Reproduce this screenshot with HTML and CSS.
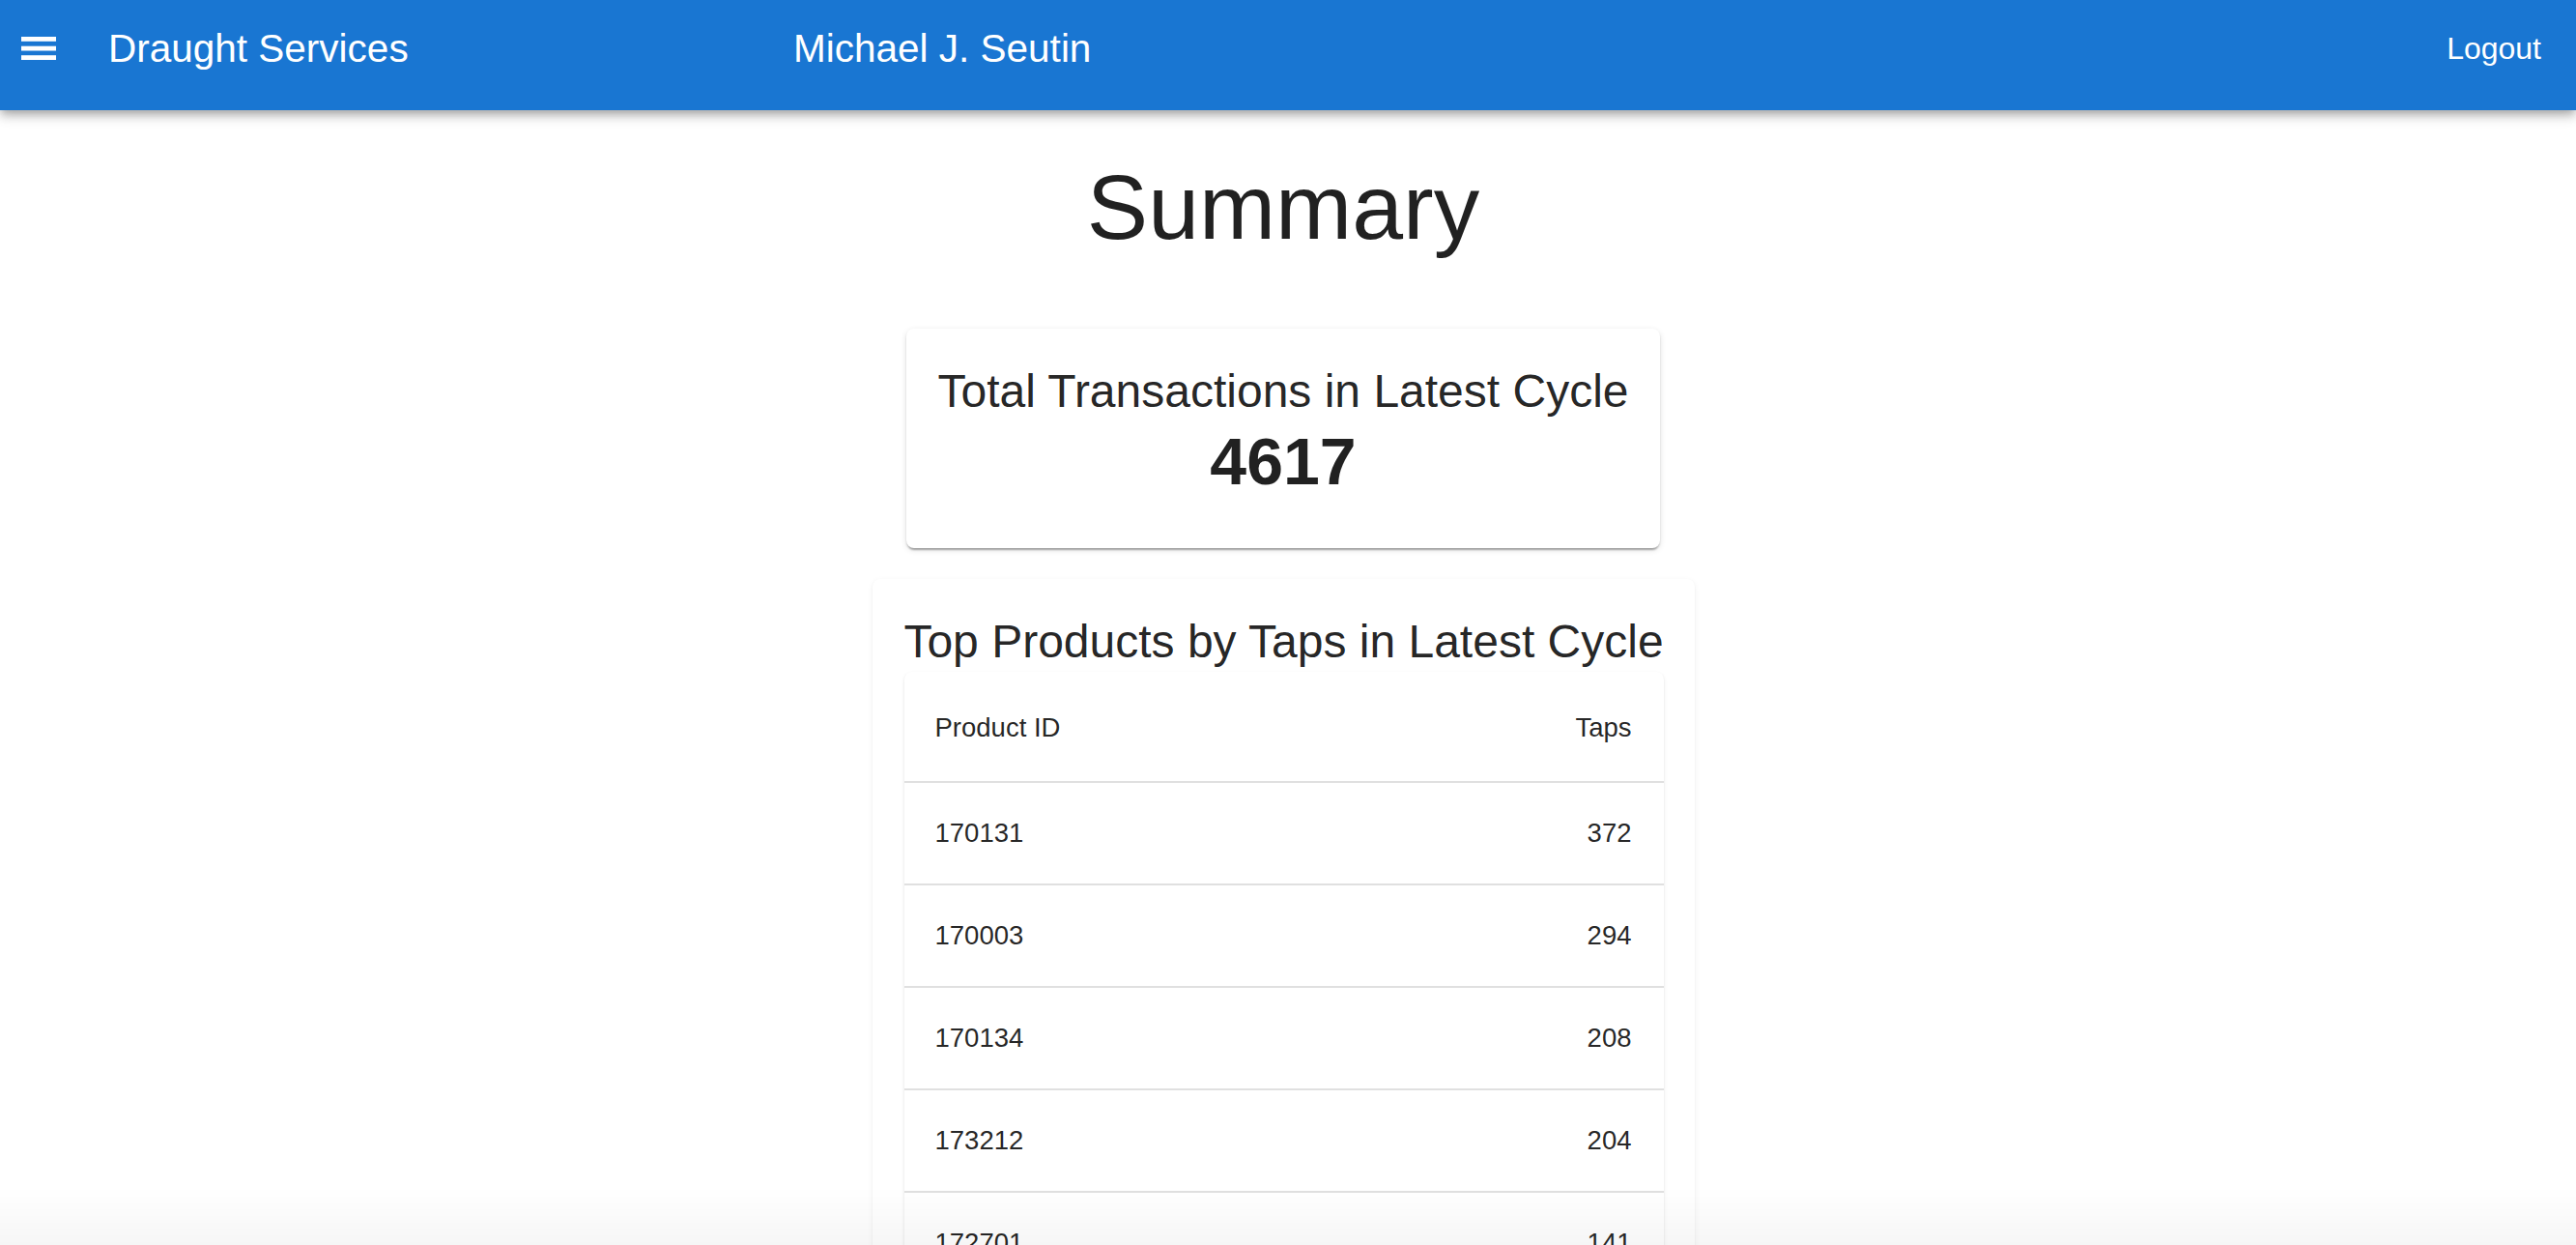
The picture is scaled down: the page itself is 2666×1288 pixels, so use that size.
FILE: index.html
```html
<!DOCTYPE html>
<html lang="en">
<head>
<meta charset="utf-8">
<title>Draught Services</title>
<link rel="stylesheet" href="styles.css">
</head>
<body>
<header class="appbar">
  <div class="toolbar">
    <button class="menu-btn" aria-label="menu">
      <svg width="36" height="24" viewBox="0 0 36 24"><rect x="0" y="0" width="36" height="4.8" fill="#fff"/><rect x="0" y="9.7" width="36" height="4.8" fill="#fff"/><rect x="0" y="19.2" width="36" height="4.8" fill="#fff"/></svg>
    </button>
    <div class="brand">Draught Services</div>
    <div class="user">Michael J. Seutin</div>
    <div class="spacer"></div>
    <button class="logout">Logout</button>
  </div>
</header>
<main class="content">
  <h1 class="page-title">Summary</h1>
  <section class="card card-total">
    <h2 class="card-title">Total Transactions in Latest Cycle</h2>
    <div class="big-number">4617</div>
  </section>
  <section class="card card-products">
    <h2 class="card-title">Top Products by Taps in Latest Cycle</h2>
    <div class="table-paper">
      <table class="table">
        <thead>
          <tr><th>Product ID</th><th class="num">Taps</th></tr>
        </thead>
        <tbody>
          <tr><td>170131</td><td class="num">372</td></tr>
          <tr><td>170003</td><td class="num">294</td></tr>
          <tr><td>170134</td><td class="num">208</td></tr>
          <tr><td>173212</td><td class="num">204</td></tr>
          <tr><td>172701</td><td class="num">141</td></tr>
          <tr><td>170010</td><td class="num">132</td></tr>
          <tr><td>170128</td><td class="num">118</td></tr>
          <tr><td>172950</td><td class="num">97</td></tr>
        </tbody>
      </table>
    </div>
  </section>
</main>
<div class="bottom-fade"></div>
</body>
</html>
```

FILE: styles.css
```css
* { box-sizing: border-box; }

html, body {
  margin: 0;
  padding: 0;
  background: #ffffff;
}

body {
  font-family: "Liberation Sans", Helvetica, Arial, sans-serif;
  color: rgba(0, 0, 0, 0.87);
}

.appbar {
  position: relative;
  z-index: 2;
  background: #1976d2;
  color: #ffffff;
  height: 114px;
  padding-bottom: 14px;
  box-shadow: 0 4px 8px -2px rgba(0,0,0,0.2), 0 7px 10px 0 rgba(0,0,0,0.14), 0 2px 18px 0 rgba(0,0,0,0.12);
}

.toolbar {
  height: 100px;
  display: flex;
  align-items: center;
  padding: 0 36px 0 22px;
}

.menu-btn {
  background: none;
  border: 0;
  padding: 0;
  margin: 0;
  width: 36px;
  height: 24px;
  display: flex;
  cursor: pointer;
}

.brand {
  margin-left: 54px;
  width: 709px;
  font-size: 40.5px;
  line-height: 1.2;
  white-space: nowrap;
}

.user {
  font-size: 40.5px;
  line-height: 1.2;
  white-space: nowrap;
}

.spacer { flex: 1; }

.logout {
  background: none;
  border: 0;
  padding: 0;
  color: #ffffff;
  font-family: inherit;
  font-size: 32px;
  line-height: 1.2;
  cursor: pointer;
}

.content {
  display: flex;
  flex-direction: column;
  align-items: center;
  padding-top: 45px;
  padding-right: 10px;
}

.page-title {
  margin: 0;
  font-size: 95px;
  font-weight: 400;
  line-height: 110px;
}

.card {
  background: #ffffff;
  border-radius: 8px;
  box-shadow: 0 4px 2px -2px rgba(0,0,0,0.2), 0 2px 2px 0 rgba(0,0,0,0.14), 0 2px 6px 0 rgba(0,0,0,0.12);
  text-align: center;
}

.card-total {
  margin-top: 71px;
  width: 780px;
  padding: 33px 20px 50px;
}

.card-title {
  margin: 0;
  font-size: 48px;
  font-weight: 400;
  line-height: 63px;
  white-space: nowrap;
}

.big-number {
  margin-top: 1px;
  font-size: 68px;
  font-weight: 700;
  line-height: 80px;
}

.card-products {
  margin-top: 32px;
  width: 851px;
  padding: 33px 32px 40px 33px;
  box-shadow: 0 2px 6px 0 rgba(0,0,0,0.06), 0 1px 2px 0 rgba(0,0,0,0.05);
}

.card-products .card-title {
  margin: 0 -20px;
}

.table-paper {
  margin-top: 0;
  background: #ffffff;
  border-radius: 8px;
  box-shadow: 0 2px 4px 0 rgba(0,0,0,0.08), 0 1px 2px 0 rgba(0,0,0,0.07);
  overflow: hidden;
}

.table {
  width: 100%;
  border-collapse: collapse;
  text-align: left;
}

.table th,
.table td {
  font-size: 27.5px;
  font-weight: 400;
  color: rgba(0, 0, 0, 0.87);
  padding: 0 33px 0 32px;
  border-bottom: 2px solid #e0e0e0;
  vertical-align: middle;
}

.table th { padding-top: 2px; }

.table thead tr { height: 114px; }
.table tbody tr { height: 106px; }

.table .num { text-align: right; }

.bottom-fade {
  position: fixed;
  left: 0;
  right: 0;
  bottom: 0;
  height: 60px;
  background: linear-gradient(to bottom, rgba(0,0,0,0), rgba(0,0,0,0.035));
  pointer-events: none;
  z-index: 3;
}
```
